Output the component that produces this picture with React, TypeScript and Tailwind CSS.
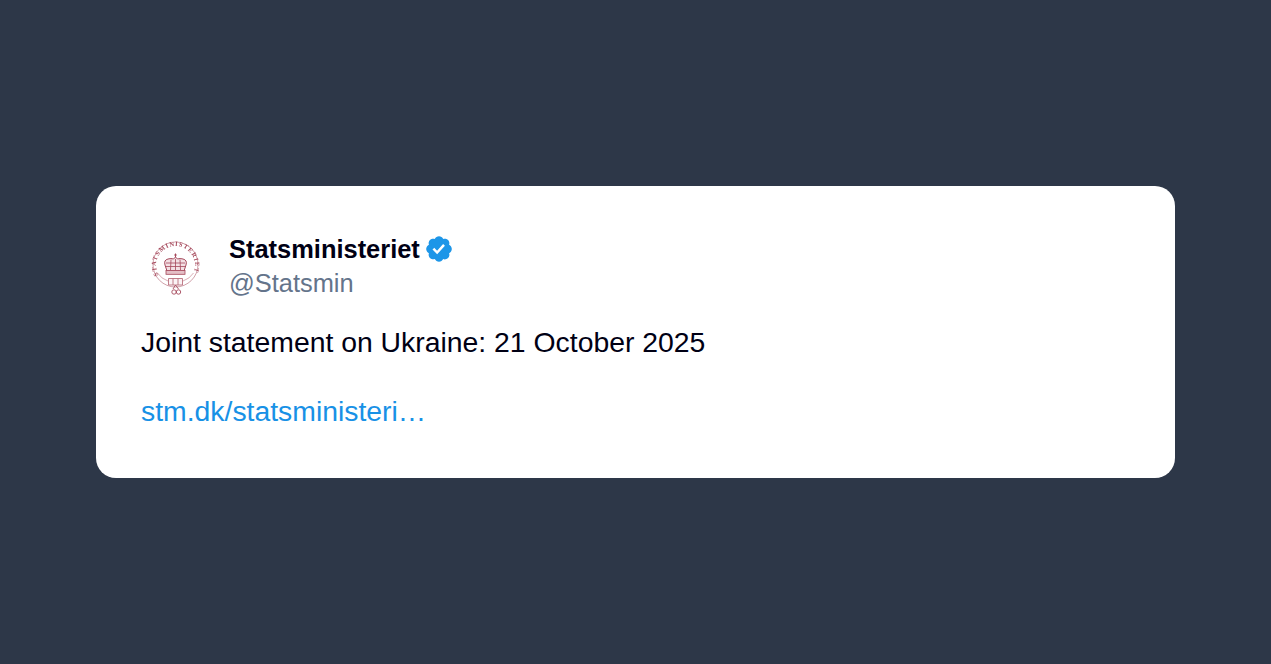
export default function App() {
  return (
    <div className="h-[664px] bg-[#2d3748] flex items-center justify-center font-['Liberation_Sans',Arial,sans-serif]">
      <div className="w-[1079px] h-[292px] bg-white rounded-[20px] px-[45px] pt-[46px]">
        <div className="flex items-center gap-6 h-[68px]">
          <div className="w-16 h-16 shrink-0 rounded-full bg-white">
            <svg width="64" height="64" viewBox="0 0 64 64" fill="none" className="blur-[0.35px]">
              <defs>
                <path id="arc" d="M17.5 41 A19.5 19.5 0 1 1 51.5 41" />
              </defs>
              <circle cx="34.5" cy="30.5" r="22.5" stroke="#c58a96" strokeWidth="0.8" />
              <path d="M16.5 39 A20 20 0 0 0 27 47 M52.5 39 A20 20 0 0 1 42 47" stroke="#c98b96" strokeWidth="0.7" />
              <text fontFamily="'Liberation Serif',serif" fontSize="6.4" fill="#a5485b" letterSpacing="0.95" fontWeight="700">
                <textPath href="#arc">STATSMINISTERIET</textPath>
              </text>
              <path d="M26 37 L24 31 Q22.5 26 27 25 Q30 24 32.5 25 L34.5 23 L36.5 25 Q39 24 42 25 Q46.5 26 45 31 L43 37 Z" fill="#f3e0e4" stroke="#a5485b" strokeWidth="1" />
              <path d="M30 25.5 L29.5 36 M34.5 25 L34.5 36 M39 25.5 L39.5 36 M25 29 L44 29 M25 32.5 L44 32.5" stroke="#a5485b" strokeWidth="0.8" />
              <rect x="25" y="36.5" width="19" height="3.8" fill="#e4bfc6" stroke="#a5485b" strokeWidth="0.8" />
              <path d="M34.5 19.5 L34.5 23 M33.2 21 L35.8 21" stroke="#a5485b" strokeWidth="1" />
              <path d="M27.5 44.5 H41.5 V51 H27.5 Z M32 44.5 V51 M37 44.5 V51" stroke="#b9707e" strokeWidth="0.9" fill="#fbf3f5" />
              <path d="M34.5 51 L32 55 M34.5 51 L37.5 55" stroke="#a5485b" strokeWidth="0.9" />
              <circle cx="33" cy="58" r="2.2" stroke="#a5485b" strokeWidth="0.9" />
              <circle cx="37.5" cy="58" r="2.2" stroke="#a5485b" strokeWidth="0.9" />
            </svg>
          </div>
          <div className="flex flex-col">
            <div className="flex items-center gap-1 h-[34px]">
              <span className="text-[25.45px] font-bold leading-[34px] text-[#000014]">Statsministeriet</span>
              <svg width="30" height="30" viewBox="0 0 22 22" className="shrink-0">
                <path fill="#1d96e8" d="M20.396 11c-.018-.646-.215-1.275-.57-1.816-.354-.54-.852-.972-1.438-1.246.223-.607.27-1.264.14-1.897-.131-.634-.437-1.218-.882-1.687-.47-.445-1.053-.75-1.687-.882-.633-.13-1.29-.083-1.897.14-.273-.587-.704-1.086-1.245-1.44S11.647 1.62 11 1.604c-.646.017-1.273.213-1.813.568s-.969.854-1.24 1.44c-.608-.223-1.267-.272-1.902-.14-.635.13-1.22.436-1.69.882-.445.47-.749 1.055-.878 1.688-.13.633-.08 1.29.144 1.896-.587.274-1.087.705-1.443 1.245-.356.54-.555 1.17-.574 1.817.02.647.218 1.276.574 1.817.356.54.856.972 1.443 1.245-.224.606-.274 1.263-.144 1.896.13.634.433 1.218.877 1.688.47.443 1.054.747 1.687.878.633.132 1.29.084 1.897-.136.274.586.705 1.084 1.246 1.439.54.354 1.17.551 1.816.569.647-.016 1.276-.213 1.817-.567s.972-.854 1.245-1.44c.604.239 1.266.296 1.903.164.636-.132 1.22-.447 1.68-.907.46-.46.776-1.044.908-1.681s.075-1.299-.165-1.903c.586-.274 1.084-.705 1.439-1.246.354-.54.551-1.17.569-1.816z" />
                <path fill="#fff" d="M9.662 14.85l-3.429-3.428 1.293-1.302 2.072 2.072 4.4-4.794 1.347 1.246z" />
              </svg>
            </div>
            <span className="text-[25.4px] leading-[34px] text-[#64748b]">@Statsmin</span>
          </div>
        </div>
        <p className="mt-[25px] text-[28.36px] leading-[35px] text-[#000014]">Joint statement on Ukraine: 21 October 2025</p>
        <p className="mt-[34px] text-[28.36px] leading-[35px] text-[#1891e6]">stm.dk/statsministeri…</p>
      </div>
    </div>
  );
}
